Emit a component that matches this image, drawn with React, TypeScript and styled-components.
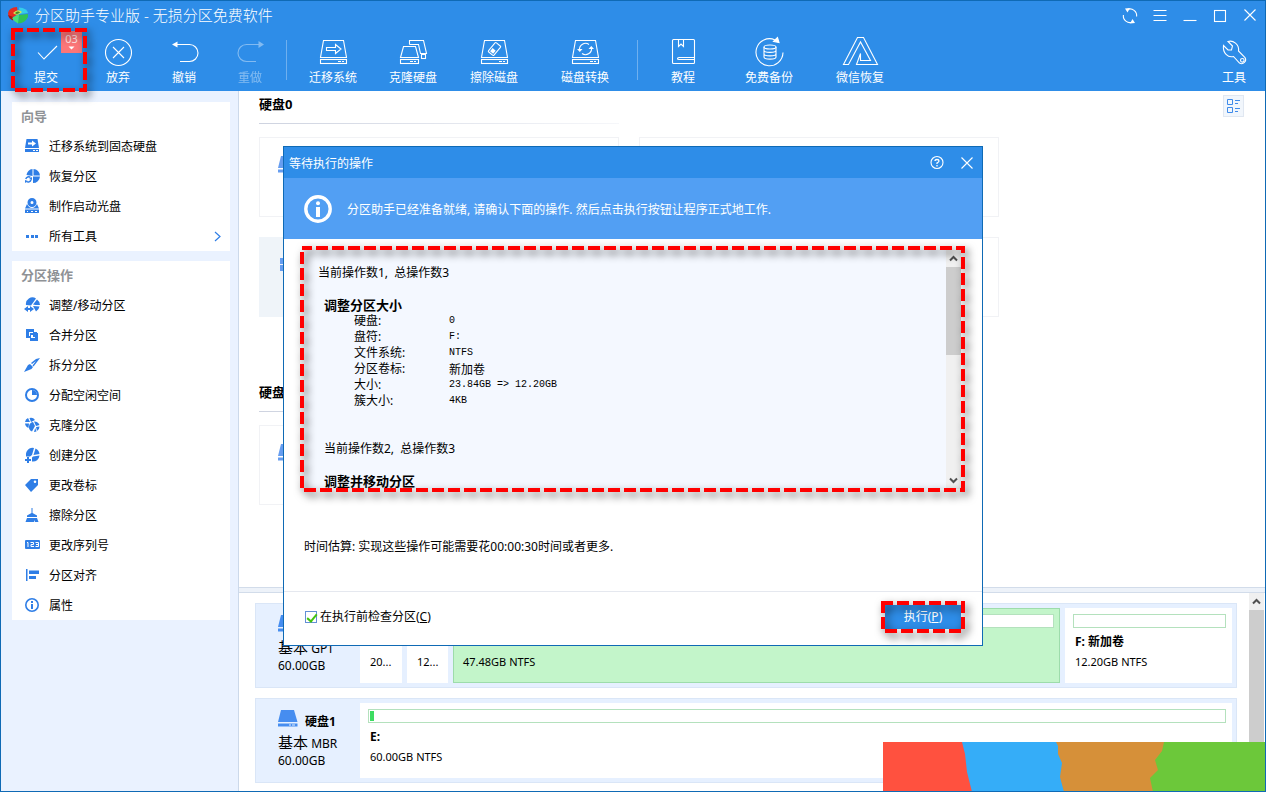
import React from 'react';
import styled, { createGlobalStyle } from 'styled-components';

const color = {
  frame: '#0f6ab5',
  primary: '#2e8de8',
  banner: '#529ff3',
  sidebar: '#eaf2ff',
  icon: '#2f7ee6',
  line: '#d2dcea',
  row: '#e6f0ff',
  rowBorder: '#dae6f7',
  bar: '#b4e1bd',
};

const GlobalStyle = createGlobalStyle`
  * { box-sizing: border-box; }
  body {
    margin: 0;
    background: #fff;
    color: #000;
    font: 12px/16px "Noto Sans", "Noto Sans CJK SC", sans-serif;
  }
  button { font: inherit; color: inherit; background: none; border: 0; padding: 0; }
  h1, h2, h3, p, ul, dl, dd { margin: 0; padding: 0; }
  ul { list-style: none; }
`;

/* ---------- window frame ---------- */

const Window = styled.div`
  position: relative;
  display: flex;
  flex-direction: column;
  min-height: 100vh;
  border: 1px solid ${color.frame};
  overflow: hidden;
`;

const Header = styled.header`
  background: ${color.primary};
  color: #fff;
`;

const TitleBar = styled.div`
  display: flex;
  align-items: center;
  height: 28px;
  padding-left: 6px;
`;

const WindowTitle = styled.h1`
  flex: 1;
  margin-left: 6px;
  font-size: 15px;
  line-height: 24px;
  font-weight: 300;
  white-space: nowrap;
`;

const WindowButton = styled.button`
  display: flex;
  align-items: center;
  justify-content: center;
  width: 30px;
  height: 28px;
`;

const Toolbar = styled.nav`
  display: flex;
  height: 62px;
  padding-left: 10px;
`;

const ToolGroup = styled.div<{ $before?: number; $after?: number }>`
  display: flex;
  padding: 0 ${p => p.$after ?? 0}px 0 ${p => p.$before ?? 0}px;
`;

const ToolButton = styled.button<{ $width: number }>`
  position: relative;
  display: flex;
  flex-direction: column;
  align-items: center;
  width: ${p => p.$width}px;
  padding-top: 7px;
  line-height: 20px;
  white-space: nowrap;
  &:disabled { color: #fff; opacity: 0.4; }
`;

const Divider = styled.span`
  width: 1px;
  height: 40px;
  margin-top: 11px;
  background: #6fb0ef;
`;

const Spacer = styled.span`
  flex: 1;
`;

const Badge = styled.span`
  position: absolute;
  top: 2px;
  right: -1px;
  display: flex;
  flex-direction: column;
  align-items: center;
  width: 21px;
  height: 22px;
  background: #fc7678;
  color: #ffe3e3;
  font-size: 11px;
  line-height: 15px;
`;

/* ---------- dashed marker ---------- */

const MarkerBox = styled.span<{ $inset: string }>`
  position: absolute;
  inset: ${p => p.$inset};
  z-index: 2;
  pointer-events: none;
`;

const MarkerSvg = styled.svg`
  display: block;
  overflow: visible;
  filter: drop-shadow(3px 4px 4px rgba(0, 0, 0, 0.65));
  & rect {
    width: calc(100% - 4px);
    height: calc(100% - 4px);
  }
`;

const Marker = ({ inset }: { inset: string }) => (
  <MarkerBox $inset={inset}>
    <MarkerSvg width="100%" height="100%" aria-hidden="true">
      <rect x="2" y="2" fill="none" stroke="#f00" strokeWidth="4" strokeDasharray="12 4" strokeDashoffset="2" />
    </MarkerSvg>
  </MarkerBox>
);

/* ---------- sidebar ---------- */

const Body = styled.div`
  display: flex;
  flex: 1;
`;

const Sidebar = styled.aside`
  flex: none;
  width: 238px;
  padding: 11px 8px 11px 11px;
  display: flex;
  flex-direction: column;
  gap: 10px;
  background: ${color.sidebar};
  border-right: 1px solid #ccd9ea;
`;

const Panel = styled.section`
  background: #fff;
`;

const PanelTitle = styled.h2`
  padding-left: 9px;
  font-size: 13px;
  line-height: 29px;
  color: #8f9296;
`;

const MenuButton = styled.button`
  display: flex;
  align-items: center;
  gap: 9px;
  width: 100%;
  height: 30px;
  padding: 0 9px 0 12px;
  text-align: left;
  color: #000;
  & > svg { flex: none; color: ${color.icon}; }
  & > span { flex: 1; padding-top: 2px; }
`;

/* ---------- main area ---------- */

const Main = styled.main`
  flex: 1;
  min-width: 0;
  display: flex;
  flex-direction: column;
`;

const Overview = styled.section`
  flex: 1;
  display: flex;
  justify-content: space-between;
  align-items: flex-start;
  padding: 0 21px 0 20px;
`;

const DiskGroups = styled.div`
  display: flex;
  flex-direction: column;
  gap: 62px;
`;

const GroupTitle = styled.h2`
  width: 360px;
  margin-bottom: 13px;
  font-size: 13px;
  line-height: 26px;
  height: 33px;
  border-bottom: 1px solid;
  border-image: linear-gradient(90deg, #ced3e0, #f6f7fa) 1;
`;

const CardGrid = styled.div`
  display: grid;
  grid-template-columns: 360px 360px;
  gap: 20px;
`;

const VolumeCard = styled.div<{ $selected?: boolean }>`
  height: 80px;
  padding: 18px;
  border: 1px solid ${p => (p.$selected ? '#eff4f9' : '#f1f2f5')};
  background: ${p => (p.$selected ? '#eff4f9' : '#fff')};
  color: #669df0;
`;

const ViewButton = styled.button`
  display: flex;
  align-items: center;
  justify-content: center;
  width: 21px;
  height: 22px;
  margin-top: 4px;
  border: 1px solid #e0e7f1;
  background: #f1f6fc;
`;

const Splitter = styled.div`
  height: 6px;
  border: solid ${color.line};
  border-width: 1px 0;
  background: #edf2f9;
`;

const Layout = styled.section`
  display: flex;
  padding-right: 1px;
`;

const DiskRows = styled.div`
  flex: 1;
  min-width: 0;
  display: flex;
  flex-direction: column;
  gap: 10px;
  padding: 10px 12px 8px 16px;
`;

const DiskRow = styled.div`
  display: flex;
  height: 85px;
  padding: 4px;
  padding-left: 0;
  border: 1px solid ${color.rowBorder};
  background: ${color.row};
`;

const DiskInfo = styled.div`
  flex: none;
  width: 104px;
  padding: 7px 0 0 22px;
  line-height: 19px;
`;

const DiskName = styled.div`
  display: flex;
  gap: 7px;
  height: 21px;
  font-weight: 700;
  line-height: 24px;
  & > svg { color: #468df0; }
`;

const DiskType = styled.div`
  height: 20px;
  line-height: 22px;
  & > span { font-size: 15px; }
`;

const Partitions = styled.div`
  flex: 1;
  min-width: 0;
  display: flex;
  gap: 5px;
`;

const PartitionBox = styled.div<{ $width?: number; $active?: boolean }>`
  flex: ${p => (p.$width ? `0 0 ${p.$width}px` : '1')};
  padding: ${p => (p.$active ? '5px' : '6px')};
  padding-left: ${p => (p.$active ? '7px' : '8px')};
  border: solid #9ddcab;
  border-width: ${p => (p.$active ? '1px' : '0')};
  background: ${p => (p.$active ? '#c3f5ca' : '#fff')};
  font-size: 11px;
  line-height: 21px;
  white-space: nowrap;
`;

const UsageBar = styled.div`
  height: 14px;
  margin-bottom: 3px;
  padding: 1px;
  border: 1px solid ${color.bar};
  background: #fff;
`;

const UsageFill = styled.div`
  width: 4px;
  height: 10px;
  background: #3ddc62;
`;

const PartitionName = styled.div`
  height: 20px;
  padding-left: 2px;
  font-size: 12px;
  font-weight: 700;
`;

const PartitionSize = styled.div`
  padding-left: 2px;
`;

/* ---------- scrollbars ---------- */

const ScrollTrack = styled.div`
  flex: none;
  display: flex;
  flex-direction: column;
  align-items: center;
  width: 15px;
  background: #f0f0f0;
  color: #505050;
`;

const ScrollArrow = styled.button`
  display: flex;
  align-items: center;
  justify-content: center;
  height: 17px;
`;

const ScrollThumb = styled.div<{ $height?: number }>`
  width: 100%;
  ${p => (p.$height ? `height: ${p.$height}px;` : 'flex: 1;')}
  background: #cdcdcd;
`;

/* ---------- dialog ---------- */

const Overlay = styled.div`
  position: absolute;
  inset: -1px;
  display: flex;
  align-items: center;
  justify-content: center;
`;

const Dialog = styled.section`
  width: 700px;
  display: flex;
  flex-direction: column;
  border: 1px solid ${color.frame};
  background: #fff;
`;

const DialogHeader = styled.header`
  display: flex;
  align-items: center;
  height: 31px;
  padding-left: 5px;
  background: ${color.primary};
  color: #fff;
`;

const DialogTitle = styled.h2`
  flex: 1;
  padding-top: 2px;
  font-size: 12px;
  font-weight: 400;
`;

const DialogBanner = styled.div`
  display: flex;
  align-items: center;
  gap: 15px;
  height: 61px;
  padding-left: 20px;
  background: ${color.banner};
  color: #fff;
  & > p { padding-top: 2px; }
`;

const DialogBody = styled.div`
  padding: 11px 21px 0 20px;
  height: 352px;
`;

const ListFrame = styled.div`
  position: relative;
  display: flex;
  height: 239px;
  background: #f4f8ff;
`;

const OperationList = styled.div`
  flex: 1;
  padding: 15px 14px 0;
`;

const Operation = styled.section`
  & > p { height: 16px; }
  & + & { margin-top: 32px; }
  & + & > p { padding-left: 6px; }
`;

const OperationTitle = styled.h3`
  height: 16px;
  margin-top: 16px;
  padding-left: 6px;
  font-size: 13px;
  line-height: 16px;
`;

const Details = styled.dl`
  display: grid;
  grid-template-columns: 95px 1fr;
  grid-auto-rows: 16px;
  padding-left: 36px;
  & > dd { font: 10px/16px "Liberation Mono", monospace; }
`;

const CjkValue = styled.span`
  display: block;
  font: 12px/16px "Noto Sans CJK SC", sans-serif;
`;

const Estimate = styled.p`
  margin-top: 50px;
`;

const DialogFooter = styled.footer`
  display: flex;
  align-items: center;
  justify-content: space-between;
  height: 54px;
  padding: 0 21px 3px;
  border-top: 1px solid #e5e8ef;
`;

const CheckLabel = styled.label`
  display: flex;
  align-items: center;
  gap: 3px;
`;

const Checkbox = styled.input`
  appearance: none;
  position: relative;
  width: 12px;
  height: 12px;
  margin: 0;
  border: 1px solid #638fd6;
  &:checked::after {
    content: '';
    position: absolute;
    left: 3px;
    top: 0;
    width: 4px;
    height: 8px;
    border: solid #43c30f;
    border-width: 0 2px 2px 0;
    transform: rotate(40deg);
  }
`;

const RunButton = styled.button`
  position: relative;
  width: 76px;
  height: 24px;
  background: ${color.primary};
  color: #fff;
`;

const CornerArt = styled.svg`
  position: absolute;
  right: -1px;
  bottom: -1px;
`;

/* ---------- icons ---------- */

const Line = ({ children, size = 32 }: { children: React.ReactNode; size?: number }) => (
  <svg width={size} height={size} viewBox={`0 0 ${size} ${size}`} fill="none" stroke="currentColor" strokeWidth="1.1" overflow="visible" aria-hidden="true">
    {children}
  </svg>
);

const Solid = ({ children }: { children: React.ReactNode }) => (
  <svg width="16" height="16" viewBox="0 0 16 16" fill="currentColor" aria-hidden="true">
    {children}
  </svg>
);

const DriveOutline = () => (
  <>
    <path d="M6.5 4.5H26.5L29.5 21.5H3.5Z" />
    <rect x="3.5" y="23.5" width="26" height="4" />
    <path d="M21 25.5h3M25 25.5h2" />
  </>
);

const CheckIcon = () => <Line><path d="M8 16.500L14 23L27 10" /></Line>;
const DiscardIcon = () => <Line><circle cx="16.500" cy="16.500" r="13" /><path d="M11 11L22 22M22 11L11 22" /></Line>;
const UndoIcon = () => (
  <Line><path d="M8 8.500H21.500A8.500 8.500 0 0 1 21.500 25.500H12" /><path d="M4 8.500L9.500 5.500V11.500Z" fill="currentColor" stroke="none" /></Line>
);
const RedoIcon = () => (
  <Line><path d="M25 8.500H12.500A8.500 8.500 0 0 0 12.500 25.500H22" /><path d="M30 8.500L24.500 5V12Z" fill="currentColor" stroke="none" /></Line>
);
const MigrateIcon = () => <Line><DriveOutline /><path d="M9.500 11.500H18.500V8.500L24 13L18.500 17.500V14.500H9.500Z" /></Line>;
const CloneIcon = () => (
  <Line>
    <path d="M6.500 10.500H18.500L21.500 21.500H3.500Z" />
    <rect x="3.500" y="23.500" width="18" height="4" />
    <path d="M13 25.500h3M17 25.500h2" />
    <path d="M12.500 8.500V4.500H26.500L29.500 17.500H23.500L21.500 8.500H12.500" />
    <rect x="24.500" y="18.500" width="4" height="4" />
  </Line>
);
const EraseIcon = () => (
  <Line>
    <DriveOutline />
    <g transform="rotate(-50 16.5 13)"><rect x="10.500" y="9.500" width="12" height="7" rx="1" /><rect x="12" y="11" width="4" height="4" fill="currentColor" stroke="none" /></g>
  </Line>
);
const ConvertIcon = () => (
  <Line>
    <DriveOutline />
    <path d="M10.500 14A6 6 0 0 1 20 8.500M22.500 12A6 6 0 0 1 13 17.500" />
    <path d="M8 13h5.500l-2.700 3zM19.500 13h5.500l-2.700-3z" fill="currentColor" stroke="none" />
  </Line>
);
const TutorialIcon = () => (
  <Line>
    <rect x="5.500" y="3.500" width="22" height="24" rx="1" />
    <path d="M11.500 3.500V10.500L14 8L16.500 10.500V3.500M27.500 21.500H12Q10.500 21.500 10.500 22.500T12 23.500H27.500" />
  </Line>
);
const BackupIcon = () => (
  <Line>
    <path d="M22 3.900A13.500 13.500 0 1 0 30 16.500" />
    <path d="M20.500 5.500L24.500 1.500L26 6.500Z" fill="currentColor" />
    <ellipse cx="17" cy="11" rx="6" ry="2" />
    <path d="M11 11V21C11 23.800 23 23.800 23 21V11M11 14.500C11 17 23 17 23 14.500M11 18C11 20.500 23 20.500 23 18" />
  </Line>
);
const RecoverIcon = () => (
  <Line><path d="M13.500 1.500H19.500L33.500 28.500H12.500L16.500 17.500V24.500H26.500L16.500 6L4.500 28.500H-0.500Z" /></Line>
);
const WrenchIcon = () => (
  <Line>
    <path d="M10 5.500C15 4 21.500 8 20.500 15L27 21.500A4 4 0 0 1 21.500 27L15.500 20.500C10 22 4.500 17 5.500 9.500L10 14H13.500L14.500 10Z" />
    <circle cx="24.300" cy="24.300" r="1.800" />
  </Line>
);
const SyncIcon = () => (
  <Line size={16}>
    <path d="M5.500 2.500A6.600 6.600 0 0 1 14.600 9.500M1.400 8A6.600 6.600 0 0 0 10.500 15" />
    <path d="M3 1.500L8 1L5.500 5.500ZM13 16L8 16.500L10.500 12Z" fill="currentColor" stroke="none" />
  </Line>
);
const CloseIcon = () => <Line size={14}><path d="M1.500 1.500L12.500 12.500M12.500 1.500L1.500 12.500" /></Line>;
const HelpIcon = () => (
  <Line size={14}><circle cx="7" cy="6.500" r="6" /><path d="M5 5Q5 3.500 7 3.500T9 5Q9 6 7 7V8M7 9V10.500" strokeWidth="1.300" /></Line>
);

const DriveGlyph = () => (
  <svg width="20" height="17" viewBox="0 0 20 17" fill="currentColor" aria-hidden="true">
    <path d="M3 0H16L19.500 12H0Z" />
    <path d="M0 13.500H19.500V16.500H0ZM11 14.500V15.500H13V14.500ZM14 14.500V15.500H17V14.500Z" fillRule="evenodd" />
  </svg>
);
const WindowsGlyph = () => (
  <svg width="18" height="18" viewBox="0 0 18 18" fill="currentColor" aria-hidden="true">
    <path d="M2 2H9V8H2ZM10 1H18V8H10ZM2 9H9V15H2ZM10 9H18V16H10Z" />
  </svg>
);

const ArrowGlyph = ({ down }: { down?: boolean }) => (
  <svg width="9" height="7" viewBox="0 0 9 7" fill="none" stroke="currentColor" strokeWidth="2" aria-hidden="true">
    <path d={down ? 'M1 1.500L4.500 5L8 1.500' : 'M1 5.500L4.500 2L8 5.500'} />
  </svg>
);

const InfoGlyph = () => (
  <svg width="28" height="28" viewBox="0 0 28 28" fill="none" aria-hidden="true">
    <circle cx="14" cy="14" r="12.200" stroke="#fff" strokeWidth="3.400" />
    <circle cx="14" cy="8.300" r="2" fill="#fff" />
    <path d="M14 12V22" stroke="#fff" strokeWidth="4" />
  </svg>
);

const AppLogo = () => (
  <svg width="22" height="18" viewBox="0 0 22 18" aria-hidden="true">
    <path d="M1 7Q2 1.500 10 1L11 8L5 12Q1 11 1 7Z" fill="#e52c20" />
    <path d="M1 9Q2 13 6 14.500L6 11Z" fill="#a5150f" />
    <path d="M12 1.500Q20 2 21 7L13 8Z" fill="#35cdea" />
    <path d="M12 9L21 8V11Q18 17 11 17.500Z" fill="#2fc257" />
    <path d="M5 12L12 8L11 17.500Q7 16 5 12Z" fill="#4be07a" />
    <path d="M6 7Q11 2 15 6Q10 11 6 7Z" fill="#d3e653" />
    <path d="M8 7Q11 4.500 13 6.500Q10 9 8 7Z" fill="#458a2c" />
  </svg>
);

const sideIcons: Record<string, React.ReactNode> = {
  drive: <><path d="M2.500 1H13.500L15 10H1Z" /><path d="M1 11H15V14H1Z" /><path d="M4 4.500H8V2.500L12 5.500L8 8.500V6.500H4ZM9 12h2v1H9zM12 12h2v1h-2z" fill="#fff" /></>,
  restore: <><path d="M8.500 1A6.500 6.500 0 0 0 2.500 7L8.500 8ZM9.500 1V7.500H16A7 7 0 0 0 9.500 1ZM16 8.500H9V15A7 7 0 0 0 16 8.500Z" /><path d="M1.800 11A3 3 0 0 1 6.500 9.500M7 12A3 3 0 0 1 2.500 13.500" fill="none" stroke="currentColor" strokeWidth="1.500" /><path d="M5 11l3-2v3zM1 15v-3l3 1z" /></>,
  disc: <><path d="M8 0A4.500 4.500 0 1 0 8 9A4.500 4.500 0 0 0 8 0ZM8 3A1.500 1.500 0 1 1 8 6A1.500 1.500 0 0 1 8 3Z" fillRule="evenodd" /><path d="M3 6Q5 10 8 10T13 6L15 10.500H1Z" /><path d="M1 11.500H15V15H1Z" /><path d="M3 13h1v1H3zM7 13h2v1H7zM11 13h2v1h-2z" fill="#fff" /></>,
  dots: <path d="M2 7H5V10H2ZM7 7H10V10H7ZM11 7H14V10H11Z" />,
  resize: <><path d="M2 8A6.500 6.500 0 0 1 12 1.500L7 8.500ZM13 2.500A7 7 0 0 1 16 8L11.500 8L9 7.500ZM9 9L15.500 9.500A7 7 0 0 1 12 14.500Z" /><path d="M0 12L4 9V11H6V9L10 12L6 15V13H4V15Z" /></>,
  merge: <path d="M2 2H10V5H13V6H14V14H6V11H2ZM5 5V9H6V6H9V5ZM7 7V8H9V10H11V11H7V9Z" fillRule="evenodd" />,
  split: <path d="M0 15L4 8L6 7L9 10L7.500 12ZM7 6L12 2L16 1L13 5L9.500 9.500L8.500 8.500L12 4L8 7Z" />,
  allocate: <><circle cx="8" cy="8" r="6" fill="none" stroke="currentColor" strokeWidth="2" /><path d="M8 3V8H13A5 5 0 0 0 8 3Z" /></>,
  clone: <><path d="M1 5A5.500 5.500 0 0 1 4 1L6 5ZM5.500 1Q9 0 11 3L7 5ZM1 6.500L5 6.500L4.500 11A5.500 5.500 0 0 1 1 6.500Z" /><path d="M9 5A5 5 0 0 0 8 14.500L11 9ZM10 4.500A5.500 5.500 0 0 1 15.500 8L12 9ZM12 10L15.500 9.500A5 5 0 0 1 13 14ZM10 15L11.200 11L12.500 14.500Z" /></>,
  create: <><path d="M2 8A6.500 6.500 0 0 1 10 1L8 8L6 9.500H2ZM11.500 1.500A6.500 6.500 0 0 1 15.500 7L9.500 8ZM9 9.500L15.500 8.500A6.500 6.500 0 0 1 8 14.500V10.500Z" /><path d="M3 10H5V12H7V14H5V16H3V14H1V12H3Z" /></>,
  tag: <path d="M1 8L7 2H14V8L7 15ZM11 3.500A1.300 1.300 0 1 0 11 6.100A1.300 1.300 0 0 0 11 3.500Z" fillRule="evenodd" />,
  broom: <path d="M7.500 1H8.500V6L13 8.500V10H3V8.500L7.500 6ZM3 11H13L14.500 15H11L10 13V15H1.500Z" />,
  align: <path d="M2 2H3.500V14H2ZM5 3.500H15V7H5ZM5 9H12V12H5Z" />,
  info: <><circle cx="8" cy="8" r="6.200" fill="none" stroke="currentColor" strokeWidth="1.600" /><path d="M7 4H9V6H7ZM7 7H9V12H7Z" /></>,
  serial: <><rect x="1" y="3" width="15" height="9" rx="1" /><path d="M3 5.500H4V10M6.500 5.500H9.500V7.500H7V9.500H10M11.500 5.500H14.500V9.500H11.500M12 7.500H14" fill="none" stroke="#fff" /></>,
};

/* ---------- data ---------- */

const panels = [
  { title: '向导', items: [['drive', '迁移系统到固态硬盘'], ['restore', '恢复分区'], ['disc', '制作启动光盘'], ['dots', '所有工具']] },
  {
    title: '分区操作',
    items: [['resize', '调整/移动分区'], ['merge', '合并分区'], ['split', '拆分分区'], ['allocate', '分配空闲空间'], ['clone', '克隆分区'],
      ['create', '创建分区'], ['tag', '更改卷标'], ['broom', '擦除分区'], ['serial', '更改序列号'], ['align', '分区对齐'], ['info', '属性']],
  },
];

const details: [string, React.ReactNode][] = [
  ['硬盘:', '0'],
  ['盘符:', 'F:'],
  ['文件系统:', 'NTFS'],
  ['分区卷标:', <CjkValue key="v">新加卷</CjkValue>],
  ['大小:', '23.84GB => 12.20GB'],
  ['簇大小:', '4KB'],
];

type PartitionProps = { width?: number; active?: boolean; name?: string; size: string; used?: boolean };

const Partition = ({ width, active, name, size, used }: PartitionProps) => (
  <PartitionBox $width={width} $active={active}>
    <UsageBar>{used && <UsageFill />}</UsageBar>
    <PartitionName>{name}</PartitionName>
    <PartitionSize>{size}</PartitionSize>
  </PartitionBox>
);

const Disk = ({ name, type, children }: { name: string; type: string; children: React.ReactNode }) => (
  <DiskRow>
    <DiskInfo>
      <DiskName><DriveGlyph />{name}</DiskName>
      <DiskType><span>基本</span> {type}</DiskType>
      60.00GB
    </DiskInfo>
    <Partitions>{children}</Partitions>
  </DiskRow>
);

const Tool = ({ icon, label, width }: { icon: React.ReactNode; label: string; width: number }) => (
  <ToolButton $width={width}>{icon}{label}</ToolButton>
);

export default function App() {
  return (
    <Window>
      <GlobalStyle />
      <Header>
        <TitleBar>
          <AppLogo />
          <WindowTitle>分区助手专业版 - 无损分区免费软件</WindowTitle>
          <WindowButton aria-label="刷新"><SyncIcon /></WindowButton>
          <WindowButton aria-label="菜单"><Line size={14}><path d="M0.500 2.500H13.500M0.500 7.500H13.500M0.500 12.500H13.500" /></Line></WindowButton>
          <WindowButton aria-label="最小化"><Line size={14}><path d="M0.500 12.500H13.500" /></Line></WindowButton>
          <WindowButton aria-label="最大化"><Line size={14}><rect x="1.500" y="2.500" width="11" height="11" /></Line></WindowButton>
          <WindowButton aria-label="关闭"><CloseIcon /></WindowButton>
        </TitleBar>
        <Toolbar>
          <ToolButton $width={70}>
            <CheckIcon />提交
            <Badge>03<svg width="7" height="4" viewBox="0 0 7 4" aria-hidden="true"><path d="M0.500 0.500H6.500L3.500 3.500Z" fill="#fff" /></svg></Badge>
            <Marker inset="-1px -6px -1px 0" />
          </ToolButton>
          <ToolGroup $before={4} $after={3}>
            <Tool icon={<DiscardIcon />} label="放弃" width={66} />
            <Tool icon={<UndoIcon />} label="撤销" width={66} />
            <ToolButton $width={66} disabled><RedoIcon />重做</ToolButton>
          </ToolGroup>
          <Divider />
          <ToolGroup $before={6} $after={2}>
            <Tool icon={<MigrateIcon />} label="迁移系统" width={80} />
            <Tool icon={<CloneIcon />} label="克隆硬盘" width={80} />
            <Tool icon={<EraseIcon />} label="擦除磁盘" width={82} />
            <Tool icon={<ConvertIcon />} label="磁盘转换" width={100} />
          </ToolGroup>
          <Divider />
          <ToolGroup>
            <Tool icon={<TutorialIcon />} label="教程" width={90} />
            <Tool icon={<BackupIcon />} label="免费备份" width={82} />
            <Tool icon={<RecoverIcon />} label="微信恢复" width={100} />
          </ToolGroup>
          <Spacer />
          <Tool icon={<WrenchIcon />} label="工具" width={62} />
        </Toolbar>
      </Header>

      <Body>
        <Sidebar>
          {panels.map(panel => (
            <Panel key={panel.title}>
              <PanelTitle>{panel.title}</PanelTitle>
              <ul>
                {panel.items.map(([icon, label]) => (
                  <li key={label}>
                    <MenuButton>
                      <Solid>{sideIcons[icon]}</Solid>
                      <span>{label}</span>
                      {icon === 'dots' && (
                        <svg width="7" height="11" viewBox="0 0 7 11" fill="none" stroke="currentColor" strokeWidth="1.200" aria-hidden="true"><path d="M1 1L6 5.500L1 10" /></svg>
                      )}
                    </MenuButton>
                  </li>
                ))}
              </ul>
            </Panel>
          ))}
        </Sidebar>

        <Main>
          <Overview>
            <DiskGroups>
              <section>
                <GroupTitle>硬盘0</GroupTitle>
                <CardGrid>
                  <VolumeCard><DriveGlyph /></VolumeCard>
                  <VolumeCard><DriveGlyph /></VolumeCard>
                  <VolumeCard $selected><WindowsGlyph /></VolumeCard>
                  <VolumeCard><DriveGlyph /></VolumeCard>
                </CardGrid>
              </section>
              <section>
                <GroupTitle>硬盘1</GroupTitle>
                <CardGrid>
                  <VolumeCard><DriveGlyph /></VolumeCard>
                </CardGrid>
              </section>
            </DiskGroups>
            <ViewButton aria-label="视图">
              <svg width="13" height="14" viewBox="0 0 13 14" fill="none" stroke="#3f8bea" aria-hidden="true">
                <path d="M0.500 0.500H5.500V5.500H0.500ZM0.500 8.500H5.500V13.500H0.500ZM8 1.500H13M8 4.500H11M8 9.500H13M8 12.500H11" />
              </svg>
            </ViewButton>
          </Overview>
          <Splitter />
          <Layout>
            <DiskRows>
              <Disk name="硬盘0" type="GPT">
                <Partition width={42} size="20..." />
                <Partition width={41} size="12..." />
                <Partition active name="C:" size="47.48GB NTFS" />
                <Partition width={167} name="F: 新加卷" size="12.20GB NTFS" />
              </Disk>
              <Disk name="硬盘1" type="MBR">
                <Partition name="E:" size="60.00GB NTFS" used />
              </Disk>
            </DiskRows>
            <ScrollTrack>
              <ScrollArrow aria-label="向上滚动"><ArrowGlyph /></ScrollArrow>
              <ScrollThumb />
            </ScrollTrack>
          </Layout>
        </Main>
      </Body>

      <CornerArt width="383" height="50" viewBox="0 0 383 50" aria-hidden="true">
        <path d="M0 0H383V50H0Z" fill="#ff513f" />
        <path d="M79 0L82 12L84 30L89 50H383V0Z" fill="#35adf8" />
        <path d="M173 0L175 4V12L179 21L177 35L181 50H383V0Z" fill="#d69039" />
        <path d="M281 0L279 9L272 18L275 28L267 36L270 50H383V0Z" fill="#6cc83a" />
      </CornerArt>

      <Overlay>
        <Dialog role="dialog" aria-label="等待执行的操作">
          <DialogHeader>
            <DialogTitle>等待执行的操作</DialogTitle>
            <WindowButton aria-label="帮助"><HelpIcon /></WindowButton>
            <WindowButton aria-label="关闭"><CloseIcon /></WindowButton>
          </DialogHeader>
          <DialogBanner>
            <InfoGlyph />
            <p>分区助手已经准备就绪, 请确认下面的操作. 然后点击执行按钮让程序正式地工作.</p>
          </DialogBanner>
          <DialogBody>
            <ListFrame>
              <OperationList>
                <Operation>
                  <p>当前操作数1,&nbsp; 总操作数3</p>
                  <OperationTitle>调整分区大小</OperationTitle>
                  <Details>
                    {details.map(([term, value]) => (
                      <React.Fragment key={term}>
                        <dt>{term}</dt>
                        <dd>{value}</dd>
                      </React.Fragment>
                    ))}
                  </Details>
                </Operation>
                <Operation>
                  <p>当前操作数2,&nbsp; 总操作数3</p>
                  <OperationTitle>调整并移动分区</OperationTitle>
                </Operation>
              </OperationList>
              <ScrollTrack>
                <ScrollArrow aria-label="向上滚动"><ArrowGlyph /></ScrollArrow>
                <ScrollThumb $height={88} />
                <Spacer />
                <ScrollArrow aria-label="向下滚动"><ArrowGlyph down /></ScrollArrow>
              </ScrollTrack>
              <Marker inset="-4px -4px -3px -4px" />
            </ListFrame>
            <Estimate>时间估算: 实现这些操作可能需要花00:00:30时间或者更多.</Estimate>
          </DialogBody>
          <DialogFooter>
            <CheckLabel>
              <Checkbox type="checkbox" defaultChecked />
              <span>在执行前检查分区(<u>C</u>)</span>
            </CheckLabel>
            <RunButton>执行(<u>P</u>)<Marker inset="-4px" /></RunButton>
          </DialogFooter>
        </Dialog>
      </Overlay>
    </Window>
  );
}
